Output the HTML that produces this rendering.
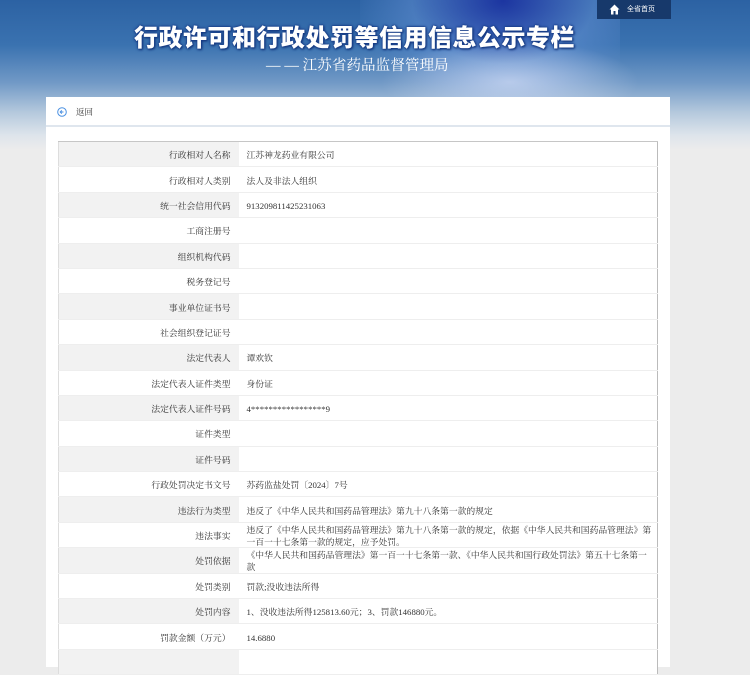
<!DOCTYPE html>
<html><head><meta charset="utf-8"><style>
*{margin:0;padding:0;box-sizing:border-box}
body{width:750px;height:655px;overflow:hidden;background:#ececec;font-family:"Liberation Serif","Noto Serif CJK SC",serif;position:relative}
.banner{position:absolute;left:0;top:0;width:750px;height:150px;background:linear-gradient(180deg,#2c62a3 0%,#3a72b0 30%,#7199c6 55%,#b5c9dd 75%,#dde4eb 90%,#ececec 100%)}
.glow{position:absolute;left:360px;top:-10px;width:260px;height:110px;background:radial-gradient(ellipse at 55% 10%,rgba(25,45,160,.85),rgba(120,160,230,.35) 45%,rgba(255,255,255,0) 75%)}
.city{position:absolute;left:380px;top:40px;width:260px;height:60px;background:radial-gradient(ellipse at 50% 70%,rgba(230,235,255,.6),rgba(255,255,255,0) 70%)}
.home{position:absolute;left:597px;top:0;width:74px;height:19px;background:#17396b;color:#fff;font-size:7px;line-height:19px;padding-left:30px;font-family:"Liberation Sans","Noto Sans CJK SC",sans-serif}
.home svg{position:absolute;left:12px;top:4px}
.title{position:absolute;left:134px;top:18px;font-family:"Liberation Sans","Noto Sans CJK SC",sans-serif;font-weight:900;font-size:24px;letter-spacing:0.5px;color:#fff;text-shadow:0 0 1px #1a3f8a,0 0 2px #1a3f8a,0 0 3px #1a3f8a,1px 1px 2px #0c2a6a}
.sub{position:absolute;left:266px;top:54px;color:#fff;font-size:14.5px;letter-spacing:0.1px}
.panel{position:absolute;left:46px;top:97px;width:624px;height:570px;background:#fff}
.back{height:30px;border-bottom:2px solid #dfe6ee;font-size:8.5px;color:#333;line-height:30px;padding-left:30px;position:relative}
.back svg{position:absolute;left:11px;top:10px}
table{position:absolute;left:12px;top:44px;width:600px;border-collapse:collapse;border-right:1px solid #bbb;border-left:1px solid #ddd;font-size:8.8px;color:#333;table-layout:fixed}
td{height:25.4px;border-top:1px solid #c6c6c6;border-bottom:1px solid #eee;vertical-align:middle;line-height:12px}
td span{position:relative;top:1px;display:block}
td.l{width:180px;text-align:right;padding-right:8px}
td.v{padding-left:8px;padding-right:2px}
tr:nth-child(odd) td{background:#f2f2f2}
tr:nth-child(odd) td.v{background:#fff}
</style></head><body>
<div class="banner"><div class="glow"></div><div class="city"></div></div>
<div class="home"><svg width="11" height="11" viewBox="0 0 11 11"><path d="M5.5 0.5L0.5 5.5H2V10.5H4.5V7H6.5V10.5H9V5.5H10.5Z" fill="#fff"/></svg>全省首页</div>
<div class="title">行政许可和行政处罚等信用信息公示专栏</div>
<div class="sub">— — 江苏省药品监督管理局</div>
<div class="panel">
<div class="back"><svg width="10" height="10" viewBox="0 0 10 10"><circle cx="5" cy="5" r="4.3" fill="none" stroke="#4a90e2" stroke-width="1"/><path d="M6.5 5H3.3M4.8 3.4L3.2 5L4.8 6.6" fill="none" stroke="#4a90e2" stroke-width="1"/></svg>返回</div>
<table>
<tr><td class="l"><span>行政相对人名称</span></td><td class="v"><span>江苏神龙药业有限公司</span></td></tr>
<tr><td class="l"><span>行政相对人类别</span></td><td class="v"><span>法人及非法人组织</span></td></tr>
<tr><td class="l"><span>统一社会信用代码</span></td><td class="v"><span>913209811425231063</span></td></tr>
<tr><td class="l"><span>工商注册号</span></td><td class="v"></td></tr>
<tr><td class="l"><span>组织机构代码</span></td><td class="v"></td></tr>
<tr><td class="l"><span>税务登记号</span></td><td class="v"></td></tr>
<tr><td class="l"><span>事业单位证书号</span></td><td class="v"></td></tr>
<tr><td class="l"><span>社会组织登记证号</span></td><td class="v"></td></tr>
<tr><td class="l"><span>法定代表人</span></td><td class="v"><span>谭欢钦</span></td></tr>
<tr><td class="l"><span>法定代表人证件类型</span></td><td class="v"><span>身份证</span></td></tr>
<tr><td class="l"><span>法定代表人证件号码</span></td><td class="v"><span>4*****************9</span></td></tr>
<tr><td class="l"><span>证件类型</span></td><td class="v"></td></tr>
<tr><td class="l"><span>证件号码</span></td><td class="v"></td></tr>
<tr><td class="l"><span>行政处罚决定书文号</span></td><td class="v"><span>苏药监盐处罚〔2024〕7号</span></td></tr>
<tr><td class="l"><span>违法行为类型</span></td><td class="v"><span>违反了《中华人民共和国药品管理法》第九十八条第一款的规定</span></td></tr>
<tr><td class="l"><span>违法事实</span></td><td class="v"><span>违反了《中华人民共和国药品管理法》第九十八条第一款的规定，依据《中华人民共和国药品管理法》第一百一十七条第一款的规定，应予处罚。</span></td></tr>
<tr><td class="l"><span>处罚依据</span></td><td class="v"><span>《中华人民共和国药品管理法》第一百一十七条第一款、《中华人民共和国行政处罚法》第五十七条第一款</span></td></tr>
<tr><td class="l"><span>处罚类别</span></td><td class="v"><span>罚款;没收违法所得</span></td></tr>
<tr><td class="l"><span>处罚内容</span></td><td class="v"><span>1、没收违法所得125813.60元；3、罚款146880元。</span></td></tr>
<tr><td class="l"><span>罚款金额（万元）</span></td><td class="v"><span>14.6880</span></td></tr>
<tr><td class="l"></td><td class="v"></td></tr>
</table>
</div>
</body></html>
